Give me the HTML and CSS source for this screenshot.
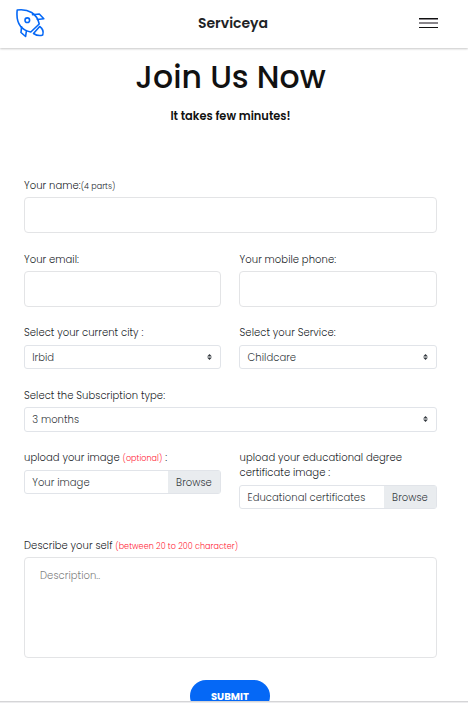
FILE: index.html
```html
<!DOCTYPE html>
<html lang="en">
<head>
<meta charset="utf-8">
<title>Serviceya</title>
<link rel="stylesheet" href="styles.css">
</head>
<body>
<div class="page">
  <header class="bar">
    <svg class="logo" viewBox="0 0 32 32" fill="none" stroke="#0568f6" stroke-width="1.6" stroke-linejoin="round" stroke-linecap="round">
      <path d="M2.200 3C1 13.500 4.500 22.500 15.800 25L24.200 17C22 6.500 13.500 1.500 2.200 3Z"/>
      <circle cx="12.300" cy="13.200" r="2.300"/>
      <path d="M17.500 7.700L24.300 7L28.800 11.700L22.400 12.500"/>
      <path d="M6.600 19.700L6 25.500L10.600 29.500L11.400 24"/>
      <path d="M24.700 19.500L18.500 26.500C22 28.800 25 29 27.700 28C29 24 27.500 21.500 24.700 19.500Z"/>
    </svg>
    <div class="brand">Serviceya</div>
    <svg class="menu" viewBox="0 0 19 10" shape-rendering="crispEdges">
      <path fill="#111" d="M0 0h19v1H0zM0 9h19v1H0z"/>
      <path fill="#89868b" d="M0 1h19v1H0zM0 4h19v2H0z"/>
    </svg>
  </header>
  <main>
    <h1>Join Us Now</h1>
    <p class="lead">It takes few minutes!</p>
    <form class="form">
      <div class="field wide name">
        <label>Your name:<small>(4 parts)</small></label>
        <div class="input"></div>
      </div>
      <div class="field email">
        <label>Your email:</label>
        <div class="input"></div>
      </div>
      <div class="field email right">
        <label>Your mobile phone:</label>
        <div class="input"></div>
      </div>
      <div class="field city">
        <label>Select your current city :</label>
        <div class="select"><span>Irbid</span><svg class="arrows" viewBox="0 0 4 5"><path fill="#343a40" d="M2 0L0 2h4zm0 5L0 3h4z"/></svg></div>
      </div>
      <div class="field city right">
        <label>Select your Service:</label>
        <div class="select"><span>Childcare</span><svg class="arrows" viewBox="0 0 4 5"><path fill="#343a40" d="M2 0L0 2h4zm0 5L0 3h4z"/></svg></div>
      </div>
      <div class="field wide plan">
        <label>Select the Subscription type:</label>
        <div class="select"><span>3 months</span><svg class="arrows" viewBox="0 0 4 5"><path fill="#343a40" d="M2 0L0 2h4zm0 5L0 3h4z"/></svg></div>
      </div>
      <div class="field upload">
        <label>upload your image <small class="note">(optional)</small> :</label>
        <div class="file"><span>Your image</span><span class="browse">Browse</span></div>
      </div>
      <div class="field upload right">
        <label>upload your educational degree<br>certificate image :</label>
        <div class="file"><span>Educational certificates</span><span class="browse">Browse</span></div>
      </div>
      <div class="field wide about">
        <label>Describe your self <small class="note">(between 20 to 200 character)</small></label>
        <div class="area">Description..</div>
      </div>
    </form>
    <div class="submit">SUBMIT</div>
  </main>
</div>
</body>
</html>
```
FILE: styles.css
```css
* { box-sizing: border-box; }
body {
  margin: 0;
  background: #ececee;
  color: #212529;
  font: 300 10px/15px Poppins, Inter, sans-serif;
  letter-spacing: .05px;
}
.page {
  height: 702px;
  overflow: hidden;
  background: #fff;
  border-bottom: 1px solid #d5d5d7;
}
.bar {
  height: 48px;
  display: grid;
  grid-template-columns: 60px 1fr 60px;
  align-items: center;
  padding: 0 16px 0 14px;
  box-shadow: 0 1px 2px rgba(0, 0, 0, .22);
}
.logo { width: 32px; height: 32px; margin: -2px 0 0 1px; }
.brand {
  text-align: center;
  font-size: 14px;
  font-weight: 600;
  line-height: 20px;
  letter-spacing: 0;
  color: #212325;
  margin-top: -2px;
}
.menu { width: 19px; height: 10px; justify-self: end; margin: -2px 14px 0 0; }
main { padding: 0 31px 0 24px; }
h1 {
  margin: 9px 0 0;
  text-align: center;
  font-size: 31.5px;
  line-height: 40px;
  font-weight: 500;
  letter-spacing: 0;
  color: #111;
}
.lead {
  margin: 11px 0 0;
  text-align: center;
  font-size: 11.4px;
  line-height: 16px;
  font-weight: 600;
  letter-spacing: 0;
  color: #111;
}
.form {
  display: grid;
  grid-template-columns: 197px 198px;
  column-gap: 18px;
  margin-top: 54px;
}
.wide { grid-column: 1 / -1; }
.field label { display: block; white-space: nowrap; }
.right label { padding-left: .6px; }
.field small { font-size: 8px; }
.note { color: #ff1a33; }
.input, .area { border: 1px solid #e3e4e6; border-radius: 4px; }
.input { height: 36px; margin-top: 4px; }
.name { height: 74px; }
.name .input { margin-top: 3px; }
.email { height: 73px; }
.city { height: 63px; }
.plan { height: 62px; }
.upload { height: 88px; }
.select, .file {
  display: flex;
  align-items: center;
  justify-content: space-between;
  height: 25px;
  margin-top: 4px;
  padding-left: 7.200px;
  border: 1px solid #e1e4e9;
  border-radius: 3px;
  color: #343a40;
}
.right .select, .right .file { padding-left: 7.600px; }
.city .select { margin-top: 5px; height: 24px; }
.file { height: 24px; }
.right .file { margin-top: 5px; }
.arrows { width: 5px; height: 6px; margin: -1px 8px 0 0; }
.browse {
  width: 52px;
  align-self: stretch;
  display: flex;
  align-items: center;
  justify-content: center;
  background: #e9ecef;
}
.area { height: 101px; margin-top: 3px; padding: 10px 15px; color: #808080; }
.submit {
  position: relative;
  left: -.5px;
  width: 80px;
  height: 32px;
  margin: 22px auto 0;
  border-radius: 16px;
  background: #0568f6;
  color: #fff;
  text-align: center;
  font-size: 10px;
  font-weight: 700;
  line-height: 34px;
}
```
